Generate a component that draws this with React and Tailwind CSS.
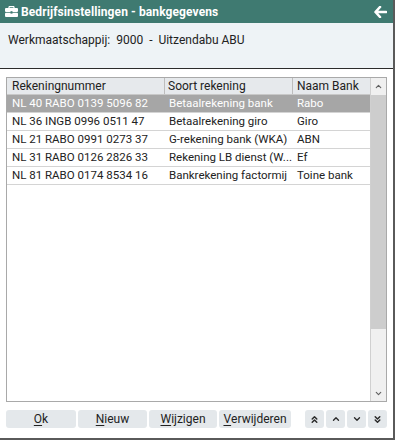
import { ChevronUp, ChevronDown, ChevronsUp, ChevronsDown } from 'lucide-react'

const rows = [
  { nr: 'NL 40 RABO 0139 5096 82', soort: 'Betaalrekening bank', bank: 'Rabo', selected: true },
  { nr: 'NL 36 INGB 0996 0511 47', soort: 'Betaalrekening giro', bank: 'Giro' },
  { nr: 'NL 21 RABO 0991 0273 37', soort: 'G-rekening bank (WKA)', bank: 'ABN' },
  { nr: 'NL 31 RABO 0126 2826 33', soort: 'Rekening LB dienst (W...', bank: 'Ef' },
  { nr: 'NL 81 RABO 0174 8534 16', soort: 'Bankrekening factormij', bank: 'Toine bank' },
]

const BriefcaseIcon = () => (
  <svg width="13" height="11" viewBox="0 0 13 11" fill="#fff">
    <path d="M4 0h5v1.2H4z M3.4 0.6h1.2v1.6H3.4z M8.4 0.6h1.2v1.6H8.4z" />
    <rect x="0" y="2" width="13" height="4" rx="1" />
    <rect x="0" y="6.8" width="13" height="4.2" rx="1" />
    <rect x="5.5" y="5.2" width="2" height="2.4" fill="#3f7a71" />
  </svg>
)

const ArrowLeft = () => (
  <svg width="13" height="12" viewBox="0 0 13 12">
    <path d="M6 1 L1.5 6 L6 11 M2 6 H12" stroke="#fff" strokeWidth="2.6" fill="none" strokeLinecap="round" strokeLinejoin="round" />
  </svg>
)

const Btn = ({ w, first, rest }) => (
  <button className={`${w} h-[18px] rounded-[3px] bg-[#e4e8eb] text-[12px] text-[#222] flex items-center justify-center`}>
    <span className="underline underline-offset-2">{first}</span>
    {rest}
  </button>
)

const NavBtn = ({ children }) => (
  <button className="w-[19px] h-[18px] rounded-[3px] bg-[#e4e8eb] flex items-center justify-center text-[#2a2a2a]">
    {children}
  </button>
)

export default function App() {
  return (
    <div className="w-[395px] h-[440px] bg-white font-['Roboto',sans-serif] text-[12px] text-[#222] flex flex-col border-r-2 border-b-2 border-[#5a5a5a]">
      {/* Title bar */}
      <div className="h-[23px] bg-[#3f7a71] flex items-center pl-[5px] pr-[6px] text-white">
        <BriefcaseIcon />
        <span className="ml-[3px] font-bold text-[12px] tracking-[0.1px]">Bedrijfsinstellingen - bankgegevens</span>
        <span className="ml-auto flex items-center"><ArrowLeft /></span>
      </div>

      {/* Company info */}
      <div className="h-[46px] bg-[#eef3f6] border-b border-[#2b2b2b] px-[8px] pt-[8px] whitespace-pre">
        Werkmaatschappij:  9000  -  Uitzendabu ABU
      </div>

      {/* Table */}
      <div className="px-[6px] pt-[8px]">
        <div className="h-[325px] border border-[#a9a9a9] flex">
          <div className="w-[363px] flex flex-col">
            <div className="h-[17px] flex bg-[#e6e9ec] border-b border-[#c8c8c8] text-[#222]">
              <div className="w-[158px] pl-[5px] border-r border-[#bdbdbd] leading-[16px]">Rekeningnummer</div>
              <div className="w-[128px] pl-[3px] border-r border-[#bdbdbd] leading-[16px]">Soort rekening</div>
              <div className="w-[77px] pl-[4px] leading-[16px]">Naam Bank</div>
            </div>
            {rows.map((r) => (
              <div
                key={r.nr}
                className={`h-[18px] flex border-b border-[#d4d4d4] leading-[17px] text-[11.5px] ${r.selected ? 'bg-[#a6a6a6] text-white' : ''}`}
              >
                <div className="w-[158px] pl-[5px] whitespace-nowrap overflow-hidden">{r.nr}</div>
                <div className="w-[128px] pl-[4px] whitespace-nowrap overflow-hidden">{r.soort}</div>
                <div className="w-[77px] pl-[4px] whitespace-nowrap overflow-hidden">{r.bank}</div>
              </div>
            ))}
          </div>
          {/* Scrollbar */}
          <div className="w-[16px] border-l border-[#d0d0d0] bg-[#f0f0f0] flex flex-col">
            <div className="h-[17px] flex items-center justify-center text-[#606060]">
              <ChevronUp size={9} strokeWidth={3} />
            </div>
            <div className="h-[234px] bg-[#cdcdcd]" />
            <div className="flex-1" />
            <div className="h-[16px] flex items-center justify-center text-[#606060]">
              <ChevronDown size={9} strokeWidth={3} />
            </div>
          </div>
        </div>
      </div>

      {/* Buttons */}
      <div className="px-[6px] pt-[8px] flex items-center">
        <div className="flex gap-[2px]">
          <Btn w="w-[70px]" first="O" rest="k" />
          <Btn w="w-[69px]" first="N" rest="ieuw" />
          <Btn w="w-[68px]" first="W" rest="ijzigen" />
          <Btn w="w-[72px]" first="V" rest="erwijderen" />
        </div>
        <div className="ml-auto flex gap-[2px]">
          <NavBtn><ChevronsUp size={11} strokeWidth={3.2} /></NavBtn>
          <NavBtn><ChevronUp size={10} strokeWidth={3.2} /></NavBtn>
          <NavBtn><ChevronDown size={10} strokeWidth={3.2} /></NavBtn>
          <NavBtn><ChevronsDown size={11} strokeWidth={3.2} /></NavBtn>
        </div>
      </div>
    </div>
  )
}
